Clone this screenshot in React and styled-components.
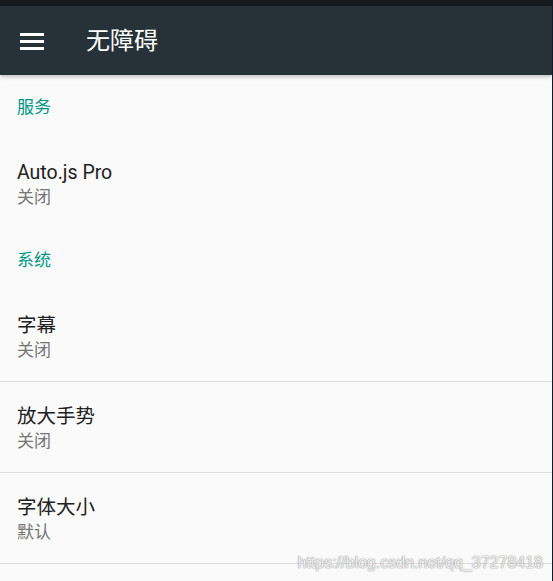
import React from "react";
import styled, { createGlobalStyle } from "styled-components";

const GlobalStyle = createGlobalStyle`
  html, body {
    margin: 0;
    padding: 0;
    background: #fafafa;
  }
  body {
    font-family: Roboto, "Noto Sans CJK SC", sans-serif;
  }
`;

const sections = [
  {
    title: "服务",
    items: [{ title: "Auto.js Pro", summary: "关闭", divider: false }],
  },
  {
    title: "系统",
    items: [
      { title: "字幕", summary: "关闭", divider: true },
      { title: "放大手势", summary: "关闭", divider: true },
      { title: "字体大小", summary: "默认", divider: true },
    ],
  },
];

const MenuIcon = () => (
  <svg width="24" height="17" viewBox="0 0 24 17">
    <rect x="0" y="0" width="24" height="3" fill="#fff" />
    <rect x="0" y="7" width="24" height="3" fill="#fff" />
    <rect x="0" y="14" width="24" height="3" fill="#fff" />
  </svg>
);

const App = () => {
  return (
    <Screen>
      <GlobalStyle />
      <StatusBar />
      <Toolbar>
        <IconButton>
          <MenuIcon />
        </IconButton>
        <Title>无障碍</Title>
      </Toolbar>
      <List>
        {sections.map(section => (
          <React.Fragment key={section.title}>
            <Category>{section.title}</Category>
            {section.items.map(item => (
              <Item key={item.title} $divider={item.divider}>
                <ItemTitle>{item.title}</ItemTitle>
                <Summary>{item.summary}</Summary>
              </Item>
            ))}
          </React.Fragment>
        ))}
      </List>
      <Watermark>https://blog.csdn.net/qq_37278418</Watermark>
    </Screen>
  );
};

const Screen = styled.div`
  position: relative;
  width: 552px;
  height: 581px;
  overflow: hidden;
  background: #fafafa;
  border-right: 1px solid #14172a;
  display: flex;
  flex-direction: column;
`;

const StatusBar = styled.div`
  height: 6px;
  background: #161b1e;
  flex-shrink: 0;
`;

const Toolbar = styled.header`
  height: 69px;
  flex-shrink: 0;
  background: #263238;
  display: flex;
  align-items: center;
  box-shadow: 0 2px 4px rgba(0, 0, 0, 0.22);
  position: relative;
  z-index: 1;
`;

const IconButton = styled.div`
  width: 24px;
  height: 17px;
  margin-left: 20px;
  margin-top: 1px;
  display: flex;
`;

const Title = styled.h1`
  margin: 1px 0 0 42px;
  font-size: 24px;
  font-weight: 400;
  color: #fff;
  line-height: 30px;
`;

const List = styled.div`
  display: flex;
  flex-direction: column;
  padding-top: 1px;
`;

const Category = styled.div`
  height: 62px;
  box-sizing: border-box;
  display: flex;
  align-items: center;
  padding: 0 0 3px 17px;
  font-size: 17px;
  color: #009688;
`;

const Item = styled.div`
  height: 91px;
  box-sizing: border-box;
  padding: 22px 17px 0;
  border-bottom: 1px solid ${p => (p.$divider ? "#dcdcdc" : "transparent")};
`;

const ItemTitle = styled.div`
  font-size: 19.5px;
  line-height: 25px;
  color: #212121;
`;

const Summary = styled.div`
  font-size: 17px;
  line-height: 24px;
  color: #757575;
`;

const Watermark = styled.div`
  position: absolute;
  right: 9px;
  top: 553px;
  font-family: "Liberation Sans", Arial, sans-serif;
  font-size: 16px;
  line-height: 20px;
  color: rgba(255, 255, 255, 0.85);
  text-shadow: 0 0 1px rgba(120, 120, 120, 0.9), 0 0 2px rgba(150, 150, 150, 0.6);
`;

export default App;
